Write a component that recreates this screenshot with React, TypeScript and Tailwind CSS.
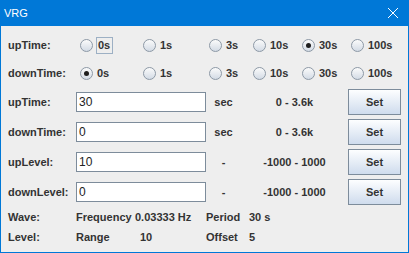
import React from "react";

const font = "font-['Liberation_Sans',Arial,sans-serif]";

const Radio = ({ checked }: { checked?: boolean }) => (
  <div className="w-[13px] h-[13px] shrink-0 rounded-full border border-[#8d99a6] bg-linear-to-b from-[#fbfbfb] to-[#d3dbe5] flex items-center justify-center">
    {checked && <div className="w-[5px] h-[5px] rounded-full bg-[#1e1e1e]" />}
  </div>
);

const options = [
  { label: "0s", w: "w-[63px]" },
  { label: "1s", w: "w-[66px]" },
  { label: "3s", w: "w-[44px]" },
  { label: "10s", w: "w-[49px]" },
  { label: "30s", w: "w-[49px]" },
  { label: "100s", w: "w-[55px]" },
];

const RadioRow = ({ label, selected, focus }: { label: string; selected: number; focus?: boolean }) => (
  <div className="h-[28px] flex items-center">
    <div className="w-[72px]">{label}</div>
    {options.map((o, i) => (
      <div key={o.label} className={`${o.w} flex items-center gap-[4px]`}>
        <Radio checked={i === selected} />
        {focus && i === 0 ? (
          <span className="h-[17px] pl-px pr-[2px] -ml-px border border-[#9db0c4] leading-[15px]">{o.label}</span>
        ) : (
          <span>{o.label}</span>
        )}
      </div>
    ))}
  </div>
);

const FieldRow = ({ label, value, unit, range }: { label: string; value: string; unit: string; range: string }) => (
  <div className="h-[30px] flex items-center">
    <div className="w-[68px]">{label}</div>
    <div className="w-[130px] h-[20px] bg-white border border-[#7d8c9b] pl-[2px] text-[12px] leading-[18px] font-normal text-[#222]">
      {value}
    </div>
    <div className="w-[35px] text-center">{unit}</div>
    <div className="w-[107px] text-center">{range}</div>
    <button className="w-[53px] h-[26px] border border-[#7d8c9b] bg-linear-to-b from-[#fdfeff] to-[#cfdced] font-bold text-[#333] text-[11px]">
      Set
    </button>
  </div>
);

export default function App() {
  return (
    <div className={`w-[409px] h-[253px] bg-[#0078d7] flex flex-col ${font}`}>
      <div className="h-[26px] flex items-center justify-between pl-[4px] pr-[11px] text-white">
        <span className="text-[11px]">VRG</span>
        <svg width="10" height="10" viewBox="0 0 10 10" stroke="white" strokeWidth="1">
          <path d="M0 0 L10 10 M10 0 L0 10" />
        </svg>
      </div>
      <div className="flex-1 mx-px mb-px bg-[#eeeeee] pl-[7px] pt-[5px] text-[11px] font-bold text-[#333]">
        <RadioRow label="upTime:" selected={4} focus />
        <RadioRow label="downTime:" selected={0} />
        <FieldRow label="upTime:" value="30" unit="sec" range="0 - 3.6k" />
        <FieldRow label="downTime:" value="0" unit="sec" range="0 - 3.6k" />
        <FieldRow label="upLevel:" value="10" unit="-" range="-1000 - 1000" />
        <FieldRow label="downLevel:" value="0" unit="-" range="-1000 - 1000" />
        <div className="h-[20px] flex items-center">
          <div className="w-[68px]">Wave:</div>
          <div className="w-[59px]">Frequency</div>
          <div className="w-[71px]">0.03333 Hz</div>
          <div className="w-[43px]">Period</div>
          <div>30 s</div>
        </div>
        <div className="h-[20px] flex items-center">
          <div className="w-[68px]">Level:</div>
          <div className="w-[64px]">Range</div>
          <div className="w-[66px]">10</div>
          <div className="w-[43px]">Offset</div>
          <div>5</div>
        </div>
      </div>
    </div>
  );
}
